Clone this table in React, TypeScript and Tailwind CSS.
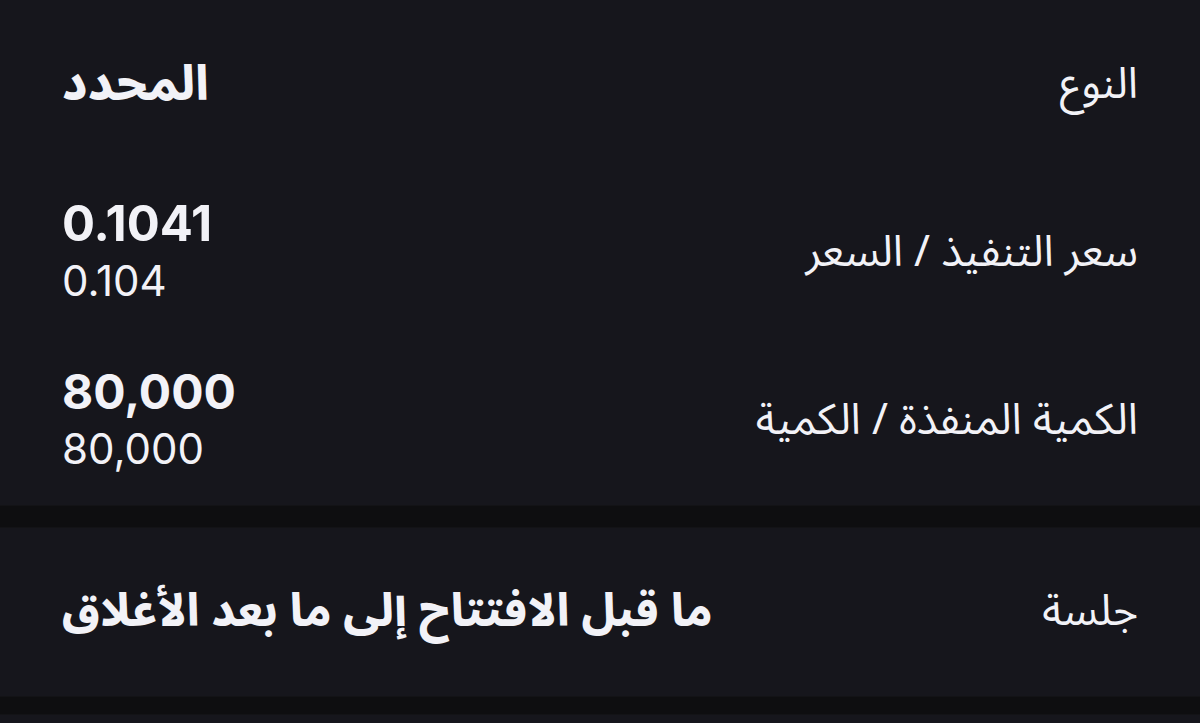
import React from "react";

const ar = { fontFamily: '"Noto Sans Arabic", "Noto Sans", "DejaVu Sans", sans-serif' };
const num = { fontFamily: 'Inter, "Noto Sans", sans-serif' };

function Row({ label, children, className }: { label: string; children: React.ReactNode; className?: string }) {
  return (
    <div className={"flex items-center justify-between px-[62px] " + (className ?? "")}>
      <div className="text-[43px] leading-[56px] text-[#f2f2f7]">{label}</div>
      <div className="flex flex-col items-end">{children}</div>
    </div>
  );
}

export default function App() {
  return (
    <div dir="rtl" style={ar} className="w-[1200px] h-[723px] overflow-hidden bg-[#16161c] flex flex-col">
      <div className="flex flex-col bg-[#16161c]">
        <Row label="النوع" className="h-[170px]">
          <div className="text-[48px] leading-[56px] font-extrabold text-[#f2f2f7]">المحدد</div>
        </Row>
        <Row label="سعر التنفيذ / السعر" className="h-[166px]">
          <div dir="ltr" style={num} className="text-[49px] leading-[56px] font-bold text-[#f2f2f7]">0.1041</div>
          <div dir="ltr" style={num} className="text-[42px] leading-[58px] text-[#f2f2f7]">0.104</div>
        </Row>
        <Row label="الكمية المنفذة / الكمية" className="h-[169px]">
          <div dir="ltr" style={num} className="text-[48px] leading-[56px] font-bold text-[#f2f2f7]">80,000</div>
          <div dir="ltr" style={num} className="text-[42px] leading-[58px] text-[#f2f2f7]">80,000</div>
        </Row>
      </div>
      <div className="h-[23px] bg-[#0e0e10] border-y border-[#131316]" />
      <Row label="جلسة" className="h-[168px] bg-[#16161c]">
        <div className="text-[45px] leading-[56px] font-extrabold text-[#f2f2f7]">ما قبل الافتتاح إلى ما بعد الأغلاق</div>
      </Row>
      <div className="h-[19px] bg-[#0e0e10] border-y border-[#131316]" />
      <div className="flex-1 bg-[#16161c]" />
    </div>
  );
}
